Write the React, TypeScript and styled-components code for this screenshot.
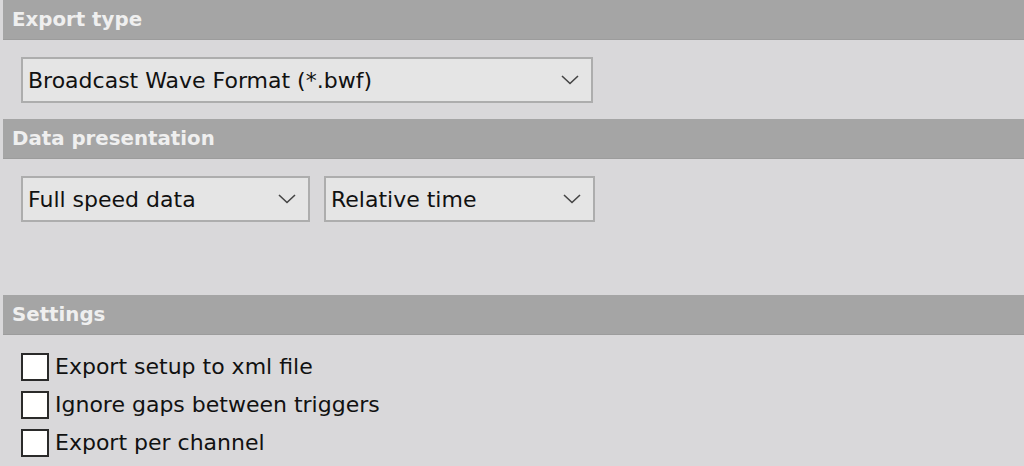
import React from "react";
import styled, { createGlobalStyle } from "styled-components";

const Global = createGlobalStyle`
  html, body { margin: 0; padding: 0; background: #d9d8da; }
  body { font-family: "DejaVu Sans", Tahoma, sans-serif; }
`;

const Page = styled.div`
  width: 1024px;
  height: 466px;
  padding-left: 3px;
  box-sizing: border-box;
  background: #d9d8da;
  overflow: hidden;
`;

const Header = styled.div`
  height: 40px;
  box-sizing: border-box;
  background: #a5a5a5;
  border-bottom: 1px solid #9c9c9c;
  color: #efefef;
  font-weight: bold;
  font-size: 19.8px;
  display: flex;
  align-items: center;
  padding-left: 9px;
  padding-bottom: 1px;
`;

const Section = styled.div<{ $pt: number; $pb: number }>`
  padding: ${(p) => p.$pt}px 0 ${(p) => p.$pb}px 18px;
`;

const Row = styled.div`
  display: flex;
  gap: 14px;
`;

const Select = styled.div<{ $w: number }>`
  width: ${(p) => p.$w}px;
  height: 46px;
  box-sizing: border-box;
  background: #e5e5e5;
  border: 2px solid #adadad;
  display: flex;
  align-items: center;
  justify-content: space-between;
  padding: 0 12px 0 5px;
  font-size: 22px;
  color: #111;
`;

const Chevron = () => (
  <svg width="18" height="10" viewBox="0 0 18 10">
    <path d="M1 1 L9 8.5 L17 1" fill="none" stroke="#444" strokeWidth="1.6" />
  </svg>
);

const CheckList = styled.div`
  display: flex;
  flex-direction: column;
  gap: 9px;
`;

const CheckRow = styled.label`
  display: flex;
  align-items: center;
  gap: 6px;
  font-size: 22px;
  color: #111;
  height: 29px;
`;

const Box = styled.span`
  width: 28px;
  height: 28px;
  box-sizing: border-box;
  background: #fff;
  border: 2px solid #2a2a2a;
  flex: none;
`;

export default function App() {
  return (
    <Page>
      <Global />
      <Header>Export type</Header>
      <Section $pt={17} $pb={16}>
        <Select $w={572}>
          <span>Broadcast Wave Format (*.bwf)</span>
          <Chevron />
        </Select>
      </Section>
      <Header>Data presentation</Header>
      <Section $pt={17} $pb={73}>
        <Row>
          <Select $w={289}>
            <span>Full speed data</span>
            <Chevron />
          </Select>
          <Select $w={271}>
            <span>Relative time</span>
            <Chevron />
          </Select>
        </Row>
      </Section>
      <Header>Settings</Header>
      <Section $pt={17} $pb={0}>
        <CheckList>
          <CheckRow><Box />Export setup to xml file</CheckRow>
          <CheckRow><Box />Ignore gaps between triggers</CheckRow>
          <CheckRow><Box />Export per channel</CheckRow>
        </CheckList>
      </Section>
    </Page>
  );
}
